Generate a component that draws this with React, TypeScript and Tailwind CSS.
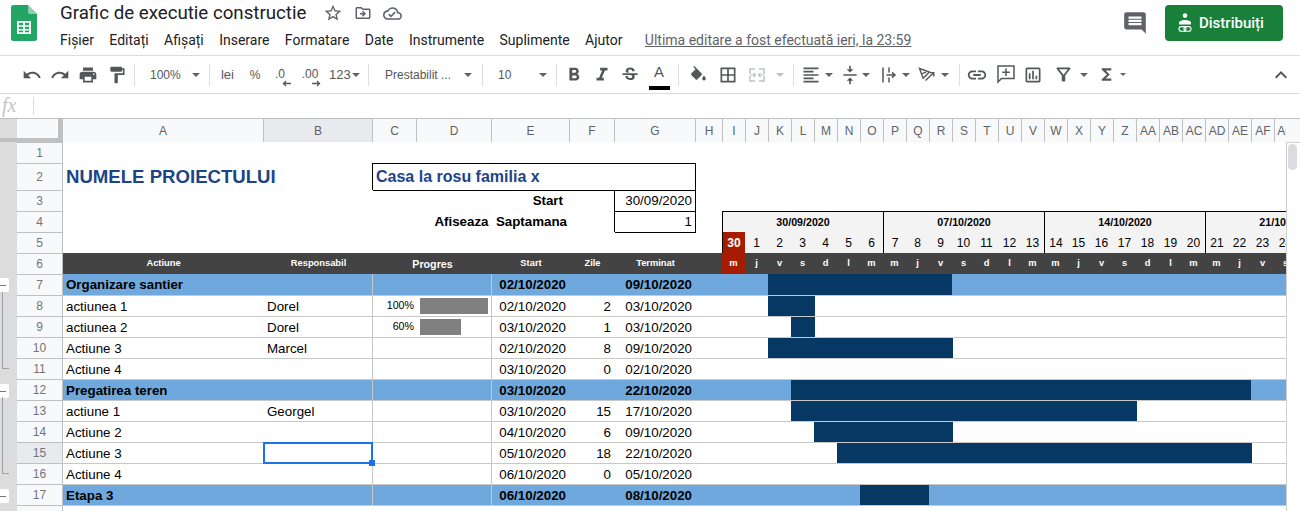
import type { ReactNode } from 'react';
import {
  MdUndo, MdRedo, MdPrint, MdFormatPaint, MdFormatBold, MdFormatItalic, MdStrikethroughS,
  MdBorderAll, MdFormatAlignLeft, MdVerticalAlignCenter, MdLink,
  MdOutlineInsertChart, MdOutlineFilterAlt, MdFunctions, MdExpandLess, MdStarBorder,
  MdOutlineDriveFileMove, MdOutlineCloudDone, MdComment,
} from 'react-icons/md';

const colLabels = ['I','J','K','L','M','N','O','P','Q','R','S','T','U','V','W','X','Y','Z','AA','AB','AC','AD','AE','AF','AG'];
const dayNumbers = [30, ...Array.from({ length: 24 }, (_, i) => i + 1)];
const dayLetters = ['m','j','v','s','d','l','m'];
const weeks = ['30/09/2020', '07/10/2020', '14/10/2020', '21/10/2020'];

type DataRow = {
  n: number;
  group?: boolean;
  a: string;
  b?: string;
  pct?: number;
  start: string;
  days?: number;
  end: string;
  bar?: [number, number];
};

const rows: DataRow[] = [
  { n: 7, group: true, a: 'Organizare santier', start: '02/10/2020', end: '09/10/2020', bar: [2, 8] },
  { n: 8, a: 'actiunea 1', b: 'Dorel', pct: 100, start: '02/10/2020', days: 2, end: '03/10/2020', bar: [2, 2] },
  { n: 9, a: 'actiunea 2', b: 'Dorel', pct: 60, start: '03/10/2020', days: 1, end: '03/10/2020', bar: [3, 1] },
  { n: 10, a: 'Actiune 3', b: 'Marcel', start: '02/10/2020', days: 8, end: '09/10/2020', bar: [2, 8] },
  { n: 11, a: 'Actiune 4', start: '03/10/2020', days: 0, end: '02/10/2020' },
  { n: 12, group: true, a: 'Pregatirea teren', start: '03/10/2020', end: '22/10/2020', bar: [3, 20] },
  { n: 13, a: 'actiune 1', b: 'Georgel', start: '03/10/2020', days: 15, end: '17/10/2020', bar: [3, 15] },
  { n: 14, a: 'Actiune 2', start: '04/10/2020', days: 6, end: '09/10/2020', bar: [4, 6] },
  { n: 15, a: 'Actiune 3', start: '05/10/2020', days: 18, end: '22/10/2020', bar: [5, 18] },
  { n: 16, a: 'Actiune 4', start: '06/10/2020', days: 0, end: '05/10/2020' },
  { n: 17, group: true, a: 'Etapa 3', start: '06/10/2020', end: '08/10/2020', bar: [6, 3] },
];

function Caret() {
  return <span className="block h-0 w-0 border-x-[4px] border-t-[4px] border-x-transparent border-t-[#5f6368]" />;
}

function Sep() {
  return <div className="h-[22px] w-px shrink-0 bg-[#dadce0]" />;
}

function Tool({ className, children }: { className: string; children?: ReactNode }) {
  return <div className={`flex h-6 shrink-0 items-center justify-center text-[#54575a] ${className}`}>{children}</div>;
}

function SheetsLogo() {
  return (
    <svg width="26" height="36" viewBox="0 0 26 36" className="shrink-0">
      <path d="M2.5 0H17l9 9v24.5a2.5 2.5 0 0 1-2.5 2.5h-21A2.5 2.5 0 0 1 0 33.5v-31A2.5 2.5 0 0 1 2.5 0z" fill="#23a566" />
      <path d="M17 0l9 9h-6.5A2.5 2.5 0 0 1 17 6.5z" fill="#8ed1b1" />
      <path d="M6 16h14v13H6z M7.8 17.8v2.5h4.3v-2.5z M13.9 17.8v2.5h4.3v-2.5z M7.8 21.8v2.2h4.3v-2.2z M13.9 21.8v2.2h4.3v-2.2z M7.8 25.5v1.7h4.3v-1.7z M13.9 25.5v1.7h4.3v-1.7z" fill="#fff" fillRule="evenodd" />
    </svg>
  );
}

function ShareIcon() {
  return (
    <svg width="16" height="20" viewBox="0 0 16 20" fill="none">
      <circle cx="8" cy="2.6" r="2.3" fill="#fff" />
      <path d="M2 11.5V9.6c0-1.6 3.4-2.6 6-2.6s6 1 6 2.6v1.9z" fill="#fff" />
      <rect x="2" y="13.6" width="7" height="4.6" rx="2.3" stroke="#fff" strokeWidth="1.1" />
      <rect x="7" y="13.6" width="7" height="4.6" rx="2.3" stroke="#fff" strokeWidth="1.1" />
    </svg>
  );
}

function FillIcon() {
  return (
    <svg width="18" height="18" viewBox="0 0 18 18" fill="#54575a">
      <path d="M4.2 0.8L5.3 0l7.4 7.5c.4.4.4 1 0 1.4l-4.5 4.5c-.4.4-1 .4-1.4 0L2.3 8.9c-.4-.4-.4-1 0-1.4l4.2-4.2z" />
      <path d="M15 9.5s1.8 2 1.8 3.2a1.8 1.8 0 0 1-3.6 0c0-1.2 1.8-3.2 1.8-3.2z" />
    </svg>
  );
}

function MergeIcon() {
  return (
    <svg width="18" height="18" viewBox="0 0 18 18" fill="none" stroke="#bdc1c6" strokeWidth="1.5">
      <path d="M2 8V3h5M11 3h5v5M2 10v5h5M11 15h5v-5" />
      <path d="M2 9h5M5.5 7l2 2-2 2M16 9h-5M12.5 7l-2 2 2 2" strokeWidth="1.2" />
    </svg>
  );
}

function WrapIcon() {
  return (
    <svg width="18" height="18" viewBox="0 0 18 18" fill="none" stroke="#54575a" strokeWidth="1.5">
      <path d="M3 1.5v15M9 1.5v5M9 11.5v5M6.5 9h8.5M12 6.4L15 9l-3 2.6" />
    </svg>
  );
}

function RotateIcon() {
  return (
    <svg width="18" height="18" viewBox="0 0 18 18" fill="none" stroke="#54575a" strokeWidth="1.4">
      <path d="M1.5 2.5l10 3.6-6.4 6.2zM3.4 7.8l4.8-1.6" />
      <path d="M7.5 14.5L15.5 7M12 6.6h3.8v3.8" />
    </svg>
  );
}

function AddCommentIcon() {
  return (
    <svg width="18" height="19" viewBox="0 0 18 19" fill="none" stroke="#54575a" strokeWidth="1.5">
      <path d="M1 1h16v12.5H4.5L1 17z" />
      <path d="M9 3.5v7.5M5.2 7.2h7.6" />
    </svg>
  );
}

function SmallArrow({ left }: { left?: boolean }) {
  return (
    <svg width="9" height="7" viewBox="0 0 9 7" fill="none" stroke="#54575a" strokeWidth="1.3" className="absolute bottom-0 left-[17px]">
      {left ? <path d="M9 3.5H1.5M4 1L1.5 3.5 4 6" /> : <path d="M0 3.5h7.5M5 1l2.5 2.5L5 6" />}
    </svg>
  );
}

function Toolbar() {
  return (
    <div className="flex h-[38px] items-center border-b border-[#dadce0] pl-[18px] pr-[7px] text-[12px]">
      <Tool className="w-[28px]"><MdUndo size={20} /></Tool>
      <Tool className="w-[28px]"><MdRedo size={20} /></Tool>
      <Tool className="w-[28px]"><MdPrint size={20} /></Tool>
      <Tool className="w-[30px]"><MdFormatPaint size={20} /></Tool>
      <div className="ml-[2px]"><Sep /></div>
      <Tool className="w-[74px] !justify-between pl-[15px] pr-[9px]"><span>100%</span><Caret /></Tool>
      <Sep />
      <Tool className="w-[35px] text-[13px]">lei</Tool>
      <Tool className="w-[20px]">%</Tool>
      <Tool className="relative w-[30px]">
        <span className="-mt-[1px] font-medium">.0</span>
        <SmallArrow left />
      </Tool>
      <Tool className="relative w-[30px]">
        <span className="-mt-[1px] font-medium">.00</span>
        <SmallArrow />
      </Tool>
      <Tool className="w-[43px] !justify-start gap-[1px] pl-[4px] text-[13px]"><span>123</span><Caret /></Tool>
      <Sep />
      <Tool className="w-[113px] !justify-between pl-[16px] pr-[10px]"><span>Prestabilit ...</span><Caret /></Tool>
      <Sep />
      <Tool className="w-[73px] !justify-between pl-[15px] pr-[9px]"><span>10</span><Caret /></Tool>
      <Sep />
      <Tool className="ml-[3px] w-[28px]"><MdFormatBold size={22} /></Tool>
      <Tool className="w-[28px]"><MdFormatItalic size={22} /></Tool>
      <Tool className="w-[28px]"><MdStrikethroughS size={20} /></Tool>
      <Tool className="relative ml-px w-[28px]">
        <span className="-mt-[5px] text-[15px] font-medium">A</span>
        <span className="absolute bottom-[-3px] left-[4px] h-[4px] w-[21px] bg-black" />
      </Tool>
      <div className="ml-[5px]"><Sep /></div>
      <Tool className="ml-[5px] w-[28px]"><FillIcon /></Tool>
      <Tool className="ml-[2px] w-[28px]"><MdBorderAll size={20} /></Tool>
      <Tool className="ml-px w-[28px]"><MergeIcon /></Tool>
      <Tool className="w-[18px]"><span className="block h-0 w-0 border-x-[4px] border-t-[4px] border-x-transparent border-t-[#bdc1c6]" /></Tool>
      <div className="ml-[4px]"><Sep /></div>
      <Tool className="ml-[5px] w-[24px]"><MdFormatAlignLeft size={20} /></Tool>
      <Tool className="ml-[2px] w-[8px]"><Caret /></Tool>
      <Tool className="ml-[5px] w-[24px]"><MdVerticalAlignCenter size={20} /></Tool>
      <Tool className="w-[8px]"><Caret /></Tool>
      <Tool className="ml-[7px] w-[24px]"><WrapIcon /></Tool>
      <Tool className="ml-[1px] w-[8px]"><Caret /></Tool>
      <Tool className="ml-[5px] w-[24px]"><RotateIcon /></Tool>
      <Tool className="ml-[2px] w-[8px]"><Caret /></Tool>
      <div className="ml-[10px]"><Sep /></div>
      <Tool className="ml-[5px] w-[24px]"><MdLink size={22} /></Tool>
      <Tool className="ml-[5px] w-[24px]"><AddCommentIcon /></Tool>
      <Tool className="ml-[3px] w-[24px]"><MdOutlineInsertChart size={20} /></Tool>
      <Tool className="ml-[6px] w-[24px]"><MdOutlineFilterAlt size={21} /></Tool>
      <Tool className="ml-[5px] w-[8px]"><Caret /></Tool>
      <Tool className="ml-[6px] w-[24px]"><MdFunctions size={19} /></Tool>
      <Tool className="ml-[1px] w-[8px]"><span className="block h-0 w-0 border-x-[3px] border-t-[3px] border-x-transparent border-t-[#5f6368]" /></Tool>
      <Tool className="ml-auto w-[24px]"><MdExpandLess size={24} /></Tool>
    </div>
  );
}

function RowHead({ n, active }: { n: number; active?: boolean }) {
  return (
    <div className={`flex w-[46px] shrink-0 items-center justify-center border-r border-t border-[#c0c0c0] text-[12px] text-[#70757a] ${active ? 'bg-[#e8eaed]' : 'bg-[#f8f9fa]'}`}>
      {n}
    </div>
  );
}

function SheetRow({ n, h, children }: { n: number; h: string; children?: ReactNode }) {
  return (
    <div className={`flex ${h}`}>
      <RowHead n={n} />
      {children}
    </div>
  );
}

function TopRows() {
  return (
    <>
      <SheetRow n={1} h="h-[21px]" />
      <SheetRow n={2} h="h-[27px]">
        <div className="flex w-[310px] shrink-0 items-center border-r border-black pl-[3px] text-[18.6px] font-bold text-[#1c4587]">
          NUMELE PROIECTULUI
        </div>
        <div className="flex w-[323px] shrink-0 items-center border-r border-t border-black pl-[3px] text-[16px] font-bold text-[#1c4587]">
          Casa la rosu familia x
        </div>
      </SheetRow>
      <SheetRow n={3} h="h-[21px]">
        <div className="w-[310px] shrink-0" />
        <div className="flex w-[242px] shrink-0 items-center justify-end border-r border-t border-black pr-[51px] font-bold">Start</div>
        <div className="flex w-[81px] shrink-0 items-center justify-end border-r border-t border-black pr-[3px]">30/09/2020</div>
      </SheetRow>
      <SheetRow n={4} h="h-[21px]">
        <div className="w-[310px] shrink-0" />
        <div className="flex w-[242px] shrink-0 items-center justify-end whitespace-pre border-r border-black pr-[47px] font-bold">Afiseaza  Saptamana</div>
        <div className="flex w-[81px] shrink-0 items-center justify-end border-r border-t border-black pr-[3px]">1</div>
        <div className="w-[26px] shrink-0" />
        <div className="flex min-w-0 flex-1 overflow-hidden border-t border-black">
          {weeks.map(w => (
            <div key={w} className="flex w-[161px] shrink-0 items-center justify-center border-l border-black bg-[#f3f3f3] text-[10.67px] font-bold">
              {w}
            </div>
          ))}
        </div>
      </SheetRow>
      <SheetRow n={5} h="h-[21px]">
        <div className="w-[552px] shrink-0" />
        <div className="w-[81px] shrink-0 border-t border-black" />
        <div className="w-[26px] shrink-0" />
        <div className="flex min-w-0 flex-1 overflow-hidden">
          {dayNumbers.map((d, i) => (
            <div
              key={i}
              className={`flex w-[23px] shrink-0 items-center justify-center text-[12px] ${i % 7 === 0 ? 'border-l border-black' : ''} ${i === 0 ? 'bg-[#a61c00] font-bold text-white' : 'bg-[#f3f3f3]'}`}
            >
              {d}
            </div>
          ))}
        </div>
      </SheetRow>
      <SheetRow n={6} h="h-[21px]">
        <div className="flex min-w-0 flex-1 bg-[#434343] text-[9.33px] font-bold text-white">
          <div className="flex w-[201px] shrink-0 items-center justify-center">Actiune</div>
          <div className="flex w-[109px] shrink-0 items-center justify-center">Responsabil</div>
          <div className="flex w-[119px] shrink-0 items-center justify-center text-[10.67px]">Progres</div>
          <div className="flex w-[78px] shrink-0 items-center justify-center">Start</div>
          <div className="flex w-[45px] shrink-0 items-center justify-center">Zile</div>
          <div className="flex w-[81px] shrink-0 items-center justify-center">Terminat</div>
          <div className="w-[26px] shrink-0" />
          <div className="flex min-w-0 flex-1 overflow-hidden">
            {dayNumbers.map((_, i) => (
              <div key={i} className={`flex w-[23px] shrink-0 items-center justify-center ${i === 0 ? 'bg-[#a61c00]' : ''}`}>
                {dayLetters[i % 7]}
              </div>
            ))}
          </div>
        </div>
      </SheetRow>
    </>
  );
}

function DataRowView({ row }: { row: DataRow }) {
  const { n, group, a, b, pct, start, days, end, bar } = row;
  const border = n === 7 ? '' : 'border-t border-[#c8c8c8]';
  const textBold = group ? 'font-bold' : '';
  return (
    <div className="flex h-[21px]">
      <RowHead n={n} active={n === 15} />
      <div className={`flex min-w-0 flex-1 ${border} ${group ? 'bg-[#6fa8dc]' : 'bg-white'}`}>
        <div className={`flex w-[201px] shrink-0 items-center truncate pl-[3px] pt-px ${textBold}`}>{a}</div>
        <div className="relative flex w-[109px] shrink-0 items-center border-r border-[#c8c8c8] pl-[3px] pt-px">
          {b}
          {n === 15 && (
            <div className="absolute inset-x-[-1px] bottom-[-1px] top-[-1px] z-10 border-2 border-[#1a73e8]">
              <span className="absolute bottom-[-4px] right-[-4px] h-[6px] w-[6px] bg-[#1a73e8]" />
            </div>
          )}
        </div>
        <div className="flex w-[44px] shrink-0 items-center justify-end pb-[2px] pr-[3px] text-[10.67px]">{pct != null && `${pct}%`}</div>
        <div className="flex w-[75px] shrink-0 items-center border-r border-[#c8c8c8] px-[3px]">
          {pct != null && <div className="h-[16px] bg-[#808080]" style={{ width: `${(pct / 100) * 68}px` }} />}
        </div>
        <div className={`flex w-[78px] shrink-0 items-center justify-end pr-[4px] pt-px ${textBold}`}>{start}</div>
        <div className="flex w-[45px] shrink-0 items-center justify-end pr-[4px] pt-px">{days}</div>
        <div className={`flex w-[81px] shrink-0 items-center justify-end pr-[4px] pt-px ${textBold}`}>{end}</div>
        <div className="w-[26px] shrink-0" />
        <div className="flex min-w-0 flex-1 overflow-hidden">
          {colLabels.map((_, i) => {
            const filled = bar && i >= bar[0] && i < bar[0] + bar[1];
            // task bars run one pixel past the last day, group bars do not
            const wide = !group && bar && i === bar[0] + bar[1] - 1;
            return <div key={i} className={`shrink-0 ${wide ? 'w-[24px]' : 'w-[23px]'} ${filled ? 'bg-[#073763]' : ''}`} />;
          })}
        </div>
      </div>
    </div>
  );
}

function GroupMark({ y, lineEnd }: { y: string; lineEnd?: string }) {
  return (
    <>
      <div className={`absolute left-0 flex h-[14px] w-[9px] items-center rounded-r-[2px] bg-white ${y}`}>
        <span className="h-px w-[6px] bg-[#70757a]" />
      </div>
      {lineEnd && <div className={`absolute left-[2px] w-[7px] border-b border-l border-[#9aa0a6] ${lineEnd}`} />}
    </>
  );
}

export default function App() {
  return (
    <div className="h-[511px] w-[1300px] overflow-hidden bg-white font-['Liberation_Sans',Arial,sans-serif] text-[13.33px] text-black">
      {/* Title bar */}
      <header className="flex h-[56px] border-b border-[#dadce0] pl-[11px] pr-[17px] font-['Roboto',sans-serif]">
        <div className="pt-[5px]"><SheetsLogo /></div>
        <div className="ml-[23px] flex flex-col">
          <div className="flex h-[26px] items-center">
            <span className="text-[18.7px] leading-none text-[#202124]">Grafic de executie constructie</span>
            <div className="ml-[17px] flex items-center gap-[11px] text-[#5f6368]">
              <MdStarBorder size={20} />
              <MdOutlineDriveFileMove size={18} />
              <MdOutlineCloudDone size={19} />
            </div>
          </div>
          <nav className="mt-[4px] flex items-center gap-[15.4px] text-[14px] text-[#202124]">
            <span>Fișier</span>
            <span>Editați</span>
            <span>Afișați</span>
            <span>Inserare</span>
            <span>Formatare</span>
            <span>Date</span>
            <span>Instrumente</span>
            <span>Suplimente</span>
            <span>Ajutor</span>
            <span className="ml-[7px] text-[#5f6368] underline">Ultima editare a fost efectuată ieri, la 23:59</span>
          </nav>
        </div>
        <div className="ml-auto flex items-start">
          <MdComment size={26} className="mr-[17px] mt-[10px] text-[#5f6368]" />
          <button className="mt-[5px] flex h-[36px] w-[118px] items-center gap-[6px] rounded-[4px] bg-[#188038] pl-[12px] text-[15px] font-medium text-white">
            <ShareIcon />
            Distribuiți
          </button>
        </div>
      </header>

      <Toolbar />

      {/* Formula bar */}
      <div className="flex h-[25px] items-center border-b border-[#c0c0c0]">
        <span className="w-[33px] pb-[2px] pl-[2px] font-['Liberation_Serif',serif] text-[20px] italic leading-none text-[#c4c4c4]">fx</span>
        <span className="h-[18px] w-px bg-[#dadce0]" />
      </div>

      <div className="flex">
        {/* Row group gutter */}
        <div className="relative h-[392px] w-[17px] shrink-0 bg-[#dcdcdc]">
          <div className="h-[19px]" />
          <div className="h-[4px] bg-[#c0c0c0]" />
          <GroupMark y="top-[159px]" lineEnd="top-[173px] h-[77px]" />
          <GroupMark y="top-[265px]" lineEnd="top-[278px] h-[77px]" />
          <GroupMark y="top-[370px]" />
        </div>

        {/* Grid */}
        <div className="w-[1269px] shrink-0 overflow-hidden">
          <div className="flex h-[23px] overflow-hidden text-[12px] text-[#5f6368]">
            <div className="w-[46px] shrink-0 border-b-[4px] border-r-[5px] border-[#c0c0c0] bg-[#f8f9fa]" />
            <div className="flex w-[201px] shrink-0 items-center justify-center border-r border-[#c0c0c0] bg-[#f8f9fa]">A</div>
            <div className="flex w-[109px] shrink-0 items-center justify-center border-r border-[#c0c0c0] bg-[#e8eaed]">B</div>
            <div className="flex w-[44px] shrink-0 items-center justify-center border-r border-[#c0c0c0] bg-[#f8f9fa]">C</div>
            <div className="flex w-[75px] shrink-0 items-center justify-center border-r border-[#c0c0c0] bg-[#f8f9fa]">D</div>
            <div className="flex w-[78px] shrink-0 items-center justify-center border-r border-[#c0c0c0] bg-[#f8f9fa]">E</div>
            <div className="flex w-[45px] shrink-0 items-center justify-center border-r border-[#c0c0c0] bg-[#f8f9fa]">F</div>
            <div className="flex w-[81px] shrink-0 items-center justify-center border-r border-[#c0c0c0] bg-[#f8f9fa]">G</div>
            <div className="flex w-[26px] shrink-0 items-center justify-center bg-[#f8f9fa]">H</div>
            {colLabels.map(c => (
              <div key={c} className="flex w-[23px] shrink-0 items-center justify-center border-l border-[#c0c0c0] bg-[#f8f9fa]">
                {c}
              </div>
            ))}
          </div>
          <TopRows />
          {rows.map(r => <DataRowView key={r.n} row={r} />)}
          <div className="flex h-[21px]">
            <RowHead n={18} />
            <div className="flex-1 border-t border-[#c8c8c8]" />
          </div>
        </div>

        {/* Vertical scrollbar */}
        <div className="w-[14px] shrink-0">
          <div className="h-[23px] bg-[#f8f9fa]" />
          <div className="h-[369px] border-l border-t border-[#d0d0d0] pl-[1px] pt-[1px]">
            <div className="h-[26px] w-[9px] rounded-[5px] bg-[#dadce0]" />
          </div>
        </div>
      </div>
    </div>
  );
}
